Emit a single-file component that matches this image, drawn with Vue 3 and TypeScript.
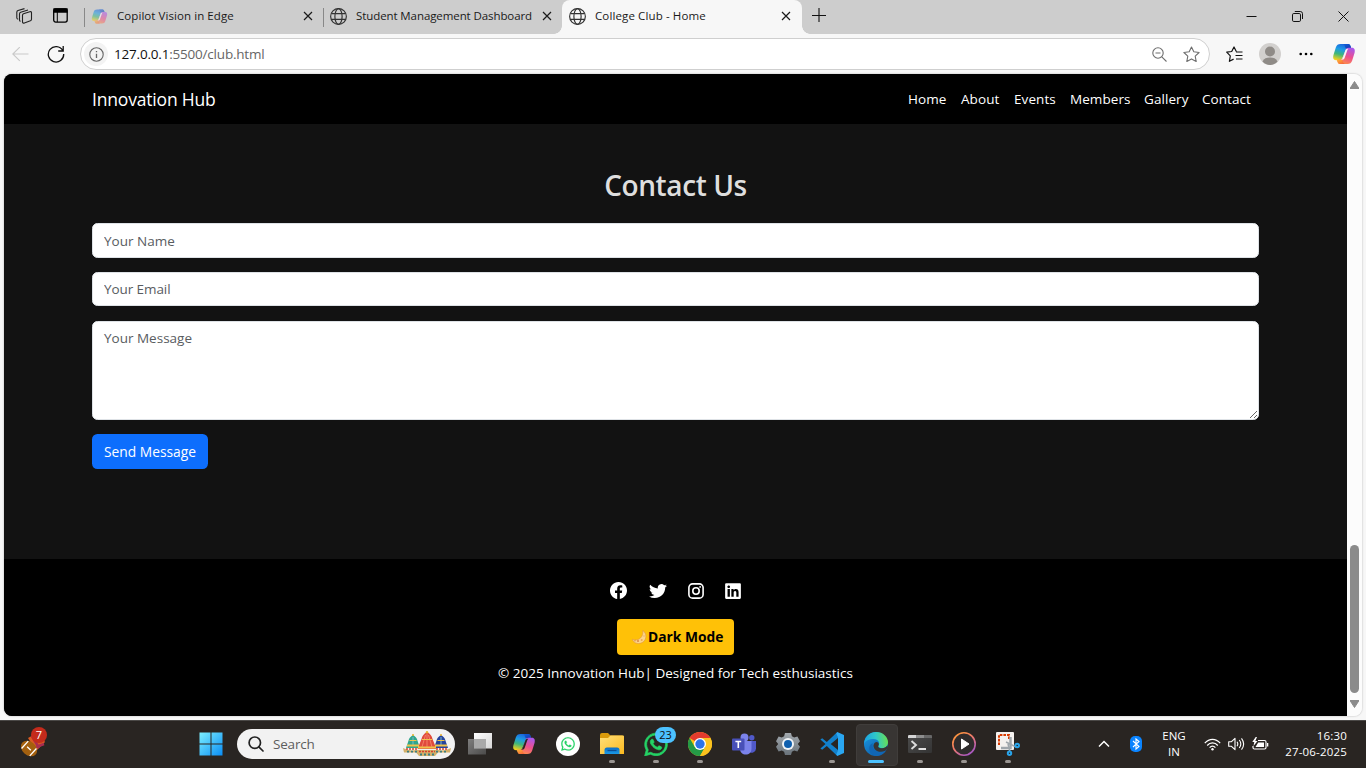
<script setup lang="ts">
import { ref } from 'vue'

interface Tab { title: string; icon: 'copilot' | 'globe'; cls: string; active?: boolean }

const tabs: Tab[] = [
  { title: 'Copilot Vision in Edge', icon: 'copilot', cls: 't-first' },
  { title: 'Student Management Dashboard', icon: 'globe', cls: 't-second' },
  { title: 'College Club - Home', icon: 'globe', cls: 't-third', active: true },
]
const links = ['Home', 'About', 'Events', 'Members', 'Gallery', 'Contact']
const apps = [
  { id: 'taskview', run: false },
  { id: 'copilot', run: false },
  { id: 'wacircle', run: false },
  { id: 'explorer', run: true },
  { id: 'whatsapp', run: true },
  { id: 'chrome', run: true },
  { id: 'teams', run: false },
  { id: 'settings', run: false },
  { id: 'vscode', run: true },
  { id: 'edge', run: true },
  { id: 'terminal', run: true },
  { id: 'media', run: true },
  { id: 'snip', run: true },
]
const name = ref('')
const email = ref('')
const message = ref('')
const waPath = 'M380.9 97.1C339 55.1 283.2 32 223.9 32c-122.4 0-222 99.6-222 222 0 39.1 10.2 77.3 29.6 111L0 480l117.7-30.9c32.4 17.7 68.9 27 106.1 27h.1c122.3 0 224.1-99.6 224.1-222 0-59.3-25.2-115-67.1-157zm-157 341.6c-33.2 0-65.7-8.9-94-25.7l-6.7-4-69.8 18.3L72 359.2l-4.4-7c-18.5-29.4-28.2-63.3-28.2-98.2 0-101.7 82.8-184.5 184.6-184.5 49.3 0 95.6 19.2 130.4 54.1 34.8 34.9 56.2 81.2 56.1 130.5 0 101.8-84.9 184.6-186.6 184.6zm101.2-138.2c-5.5-2.8-32.8-16.2-37.9-18-5.1-1.9-8.8-2.8-12.5 2.8-3.7 5.6-14.3 18-17.6 21.8-3.2 3.7-6.5 4.2-12 1.4-32.6-16.3-54-29.1-75.5-66-5.7-9.8 5.7-9.1 16.3-30.3 1.8-3.7.9-6.9-.5-9.7-1.4-2.8-12.5-30.1-17.1-41.2-4.5-10.8-9.1-9.3-12.5-9.5-3.2-.2-6.9-.2-10.6-.2-3.7 0-9.7 1.4-14.8 6.9-5.1 5.6-19.4 19-19.4 46.3 0 27.3 19.9 53.7 22.6 57.4 2.8 3.7 39.1 59.7 94.8 83.8 35.2 15.2 49 16.5 66.6 13.9 10.7-1.6 32.8-13.4 37.4-26.4 4.6-13 4.6-24.1 3.2-26.4-1.3-2.5-5-3.9-10.5-6.6z'
</script>

<template>
  <div class="screen">
    <svg class="defs" width="0" height="0" aria-hidden="true">
      <defs>
        <linearGradient id="cpA" x1="0.6" y1="0" x2="0.3" y2="1">
          <stop offset="0" stop-color="#1b62dc" /><stop offset=".35" stop-color="#1c9be6" /><stop offset=".65" stop-color="#3fb67a" /><stop offset="1" stop-color="#f2d21c" />
        </linearGradient>
        <linearGradient id="cpB" x1="0.7" y1="0" x2="0.3" y2="1">
          <stop offset="0" stop-color="#a957ea" /><stop offset=".5" stop-color="#ee4f8d" /><stop offset="1" stop-color="#fd9248" />
        </linearGradient>
        <linearGradient id="cpC" x1="0" y1="0" x2="1" y2="1">
          <stop offset="0" stop-color="#0d62dd" /><stop offset="1" stop-color="#1b36ac" />
        </linearGradient>
        <linearGradient id="cpD" x1="0" y1="0" x2="1" y2="1">
          <stop offset="0" stop-color="#ffb732" /><stop offset="1" stop-color="#f4573e" />
        </linearGradient>
        <linearGradient id="winG" x1="0" y1="0" x2="1" y2="1">
          <stop offset="0" stop-color="#7df0ff" /><stop offset="1" stop-color="#0a8df5" />
        </linearGradient>
        <linearGradient id="tvA" x1="0" y1="0" x2="1" y2="1">
          <stop offset="0" stop-color="#fff" /><stop offset="1" stop-color="#d6d6d6" />
        </linearGradient>
        <linearGradient id="tvB" x1="0" y1="0" x2="1" y2="1">
          <stop offset="0" stop-color="#8e8e8e" /><stop offset="1" stop-color="#515151" />
        </linearGradient>
        <linearGradient id="foldG" x1="0" y1="0" x2="1" y2="1">
          <stop offset="0" stop-color="#ffe07a" /><stop offset="1" stop-color="#fbb91f" />
        </linearGradient>
        <linearGradient id="foldB" x1="0" y1="0" x2="0" y2="1">
          <stop offset="0" stop-color="#0d6fc4" /><stop offset="1" stop-color="#1b9ae8" />
        </linearGradient>
        <linearGradient id="gearG" x1="0" y1="0" x2="0" y2="1">
          <stop offset="0" stop-color="#a3a9ae" /><stop offset="1" stop-color="#69727a" />
        </linearGradient>
        <linearGradient id="edA" x1="0" y1="0.4" x2="1" y2="0.3">
          <stop offset="0" stop-color="#1ca3e4" /><stop offset=".5" stop-color="#2fc8c8" /><stop offset="1" stop-color="#6be04e" />
        </linearGradient>
        <linearGradient id="edB" x1="0" y1="0" x2=".8" y2="1">
          <stop offset="0" stop-color="#1b9be6" /><stop offset="1" stop-color="#0c59a4" />
        </linearGradient>
        <linearGradient id="trm" x1="0" y1="0" x2="1" y2="1">
          <stop offset="0" stop-color="#4b4b4b" /><stop offset="1" stop-color="#343434" />
        </linearGradient>
        <linearGradient id="medG" x1="0" y1="0" x2=".7" y2="1">
          <stop offset="0" stop-color="#ff9d2e" /><stop offset=".5" stop-color="#ee7a68" /><stop offset="1" stop-color="#a857c4" />
        </linearGradient>
        <symbol id="copilot" viewBox="0 0 24 24">
          <path d="M8.600 2h7.500c1.300 0 2 .8 2.400 2l.7 2.400h-3c-1.300 0-2 .6-2.400 1.900L10.800 15c-.6 2-1.500 3.200-3.400 3.200H4C1.300 18.200.8 15.800 1.400 13.300L3.800 5.500C4.600 3 6 2 8.600 2z" fill="url(#cpA)" />
          <path d="M12 2h4.100c1.300 0 2 .8 2.400 2l.8 2.600h-4c-1.400 0-2-.6-2.300-1.800C12.700 3.400 12.300 2 10.500 2z" fill="url(#cpC)" />
          <path d="M15.400 22H8c-1.300 0-2-.8-2.400-2L5 17.800h3.200c1.400 0 2.200-.7 2.600-2L13.500 8c.6-1.500 1.500-2.300 3.200-2.300H20c2.700 0 3.200 2.500 2.600 5l-2.400 7.800c-.8 2.500-2.200 3.500-4.800 3.500z" fill="url(#cpB)" />
          <path d="M5 17.800h3.600c1.400 0 2 .6 2.300 1.700.4 1.500 1 2.500 2.500 2.500H8c-1.300 0-2-.8-2.400-2z" fill="url(#cpD)" />
          <path class="gap" d="M13.300 8.600c.4-1.200 1-1.900 2.300-1.900h.8c-.6.500-.9 1-1.200 1.900l-2.400 7c-.5 1.500-1.200 2.200-2.800 2.200h-1c1-.5 1.500-1.300 1.900-2.400z" />
        </symbol>
        <symbol id="globe" viewBox="0 0 16 16">
          <g fill="none" stroke="#333" stroke-width="1.100"><circle cx="8" cy="8" r="7.400" /><ellipse cx="8" cy="8" rx="3.400" ry="7.400" /><path d="M1.300 5.300h13.400M1.300 10.700h13.400" /></g>
        </symbol>
        <symbol id="close" viewBox="0 0 10 10"><path d="M1 1l8 8M9 1L1 9" stroke="#1a1a1a" stroke-width="1.200" fill="none" /></symbol>
      </defs>
    </svg>

    <header class="tabbar">
      <svg class="ws" width="17" height="17" viewBox="0 0 17 17" fill="none" stroke="#222" stroke-width="1.100" stroke-linejoin="round">
        <path d="M6.500 7.200c0-.8.300-1.200 1-1.500l6.300-2c1-.3 1.700.1 1.700 1.100v6.400c0 .8-.4 1.200-1.100 1.500l-6 2.300c-1 .4-1.900 0-1.900-1z" />
        <path d="M4.500 13.400c-.7-.2-1-.6-1-1.400V6c0-.9.400-1.400 1.200-1.700L12 1.900M2.200 11.300C1.300 11 .8 10.600.8 9.700V4.200c0-1 .4-1.400 1.200-1.700L8.500.6" />
      </svg>
      <svg class="pane" width="15" height="15" viewBox="0 0 15 15" fill="none" stroke="#000" stroke-width="1.300">
        <rect x=".7" y=".9" width="13.500" height="13.200" rx="2" /><path d="M1 1h13v3H1z" fill="#000" /><path d="M4.300 4v10" stroke-width="1" />
      </svg>
      <div v-for="t in tabs" :key="t.title" class="tab" :class="[t.cls, { active: t.active }]">
        <svg class="fav" width="17" height="17"><use :href="'#' + t.icon" /></svg>
        <span class="title">{{ t.title }}</span>
        <svg class="x" width="10" height="10"><use href="#close" /></svg>
      </div>
      <svg class="plus" width="14" height="14" viewBox="0 0 14 14"><path d="M7 0v14M0 7.500h14" stroke="#111" stroke-width="1.100" /></svg>
      <div class="winbtns">
        <svg width="11" height="11" viewBox="0 0 11 11"><path d="M.5 5.500h10" stroke="#111" /></svg>
        <svg width="11" height="11" viewBox="0 0 11 11" fill="none" stroke="#111"><rect x=".5" y="2.500" width="8" height="8" rx="1.300" /><path d="M2.800.5h5.500q2.200 0 2.200 2.200v5.300" /></svg>
        <svg width="11" height="11" viewBox="0 0 11 11"><path d="M.5.5l10 10M10.500.5l-10 10" stroke="#111" fill="none" /></svg>
      </div>
    </header>

    <div class="toolbar">
      <svg class="back" width="17" height="15" viewBox="0 0 17 15" fill="none" stroke="#c9c9c9" stroke-width="1.100"><path d="M16.500 7H.8M7.800.1L.8 7l7 6.900" /></svg>
      <svg class="reload" width="18" height="18" viewBox="0 0 18 18" fill="none" stroke="#111" stroke-width="1.300"><path d="M15.700 5.500A7.700 7.700 0 1 0 16.700 9M16.200 1v5h-5" /></svg>
      <div class="url">
        <span class="info"><svg width="15" height="15" viewBox="0 0 15 15"><circle cx="7.500" cy="7.500" r="6.700" fill="none" stroke="#666" stroke-width="1.100" /><path d="M7.500 6.700v4.300M7.500 4v1.300" stroke="#666" stroke-width="1.300" /></svg></span>
        <span class="addr">127.0.0.1<em>:5500/club.html</em></span>
        <svg class="mag" width="15" height="15" viewBox="0 0 15 15" fill="none" stroke="#6e6e6e" stroke-width="1.100"><circle cx="6" cy="6" r="5.200" /><path d="M9.800 9.800l4.700 4.700M3.500 6h5" /></svg>
        <svg class="star" width="17" height="17" viewBox="0 0 17 17" fill="none" stroke="#6e6e6e" stroke-width="1.100" stroke-linejoin="round"><path d="M8.500 1l2.300 4.800 5.300.7-3.900 3.700 1 5.300-4.700-2.600-4.700 2.600 1-5.300L.9 6.500l5.300-.7z" /></svg>
      </div>
      <svg class="favs" width="17" height="17" viewBox="0 0 17 17" fill="none" stroke="#111" stroke-width="1.200" stroke-linejoin="round"><path d="M10.300 5.500L8 1 5.700 5.500.7 6.200 4.300 9.800l-.9 5.500 4.200-2.200M10 6h6.500M9.500 9.500h7M10 13h6.500" /></svg>
      <svg class="avatar" width="22" height="22" viewBox="0 0 22 22"><circle cx="11" cy="11" r="11" fill="#d2d0ce" /><circle cx="11" cy="8.500" r="5" fill="#8f8b87" /><path d="M3.500 18.500c1.500-3.200 4-4 7.500-4s6 .8 7.500 4C16.500 20.800 14 22 11 22s-5.500-1.200-7.500-3.500z" fill="#8f8b87" /></svg>
      <svg class="dots" width="14" height="4" viewBox="0 0 14 4"><circle cx="1.700" cy="2" r="1.300" /><circle cx="7" cy="2" r="1.300" /><circle cx="12.300" cy="2" r="1.300" /></svg>
      <svg class="cop" width="24" height="24"><use href="#copilot" /></svg>
    </div>

    <div class="viewport">
      <div class="page">
        <nav class="navbar">
          <span class="brand">Innovation Hub</span>
          <a v-for="l in links" :key="l" :class="l.toLowerCase()"><span>{{ l }}</span></a>
        </nav>
        <main class="contact-us">
          <h2>Contact Us</h2>
          <form @submit.prevent>
            <input v-model="name" class="name" placeholder="Your Name" />
            <input v-model="email" class="mail" placeholder="Your Email" />
            <textarea v-model="message" placeholder="Your Message"></textarea>
            <button class="send" type="submit">Send Message</button>
          </form>
        </main>
        <footer class="foot">
          <div class="social">
            <svg class="fb" width="17" height="17" viewBox="0 0 16 16" fill="#fff"><path d="M16 8.049c0-4.446-3.582-8.050-8-8.050C3.580 0-.002 3.603-.002 8.050c0 4.017 2.926 7.347 6.750 7.951v-5.625h-2.030V8.050H6.750V6.275c0-2.017 1.195-3.131 3.022-3.131.876 0 1.791.157 1.791.157v1.980h-1.009c-.993 0-1.303.621-1.303 1.258v1.510h2.218l-.354 2.326H9.250V16c3.824-.604 6.750-3.934 6.750-7.951" /></svg>
            <svg width="18" height="17" viewBox="0 0 16 16" fill="#fff" preserveAspectRatio="none"><path d="M5.026 15c6.038 0 9.341-5.003 9.341-9.334q.002-.211-.006-.422A6.700 6.700 0 0 0 16 3.542a6.700 6.700 0 0 1-1.889.518 3.300 3.300 0 0 0 1.447-1.817 6.500 6.500 0 0 1-2.087.793A3.286 3.286 0 0 0 7.875 6.030a9.320 9.320 0 0 1-6.767-3.429 3.290 3.290 0 0 0 1.018 4.382A3.300 3.300 0 0 1 .64 6.575v.045a3.290 3.290 0 0 0 2.632 3.218 3.200 3.200 0 0 1-.865.115 3 3 0 0 1-.614-.057 3.280 3.280 0 0 0 3.067 2.277A6.600 6.600 0 0 1 .78 13.580a6 6 0 0 1-.78-.045A9.340 9.340 0 0 0 5.026 15" /></svg>
            <svg width="16" height="16" viewBox="0 0 16 16" fill="none" stroke="#fff" stroke-width="1.600"><rect x=".9" y=".9" width="14.200" height="14.200" rx="3.700" /><circle cx="8" cy="8" r="3.200" /><circle cx="12.100" cy="3.900" r=".9" fill="#fff" stroke="none" /></svg>
            <svg width="16" height="18" viewBox="0 0 448 512" fill="#fff"><path d="M416 32H31.900C14.300 32 0 46.500 0 64.300v383.400C0 465.500 14.300 480 31.900 480H416c17.600 0 32-14.500 32-32.300V64.300c0-17.800-14.400-32.300-32-32.300zM135.400 416H69V202.200h66.500V416zm-33.200-243c-21.300 0-38.500-17.300-38.500-38.500S80.900 96 102.200 96c21.200 0 38.500 17.300 38.500 38.500 0 21.300-17.200 38.500-38.500 38.500zm282.100 243h-66.400V312c0-24.800-.5-56.700-34.500-56.700-34.600 0-39.900 27-39.900 54.900V416h-66.400V202.200h63.700v29.200h.9c8.900-16.800 30.600-34.500 62.200-34.500 66.500 0 78.900 43.800 78.900 100.900V416z" /></svg>
          </div>
          <button class="mode" type="button">
            <svg width="15" height="14" viewBox="0 0 15 14"><path d="M10.700.4C15 3.200 14.800 9.400 11 12.100 7.300 14.700 1.900 13.700.2 9.300c3.300 1.200 6.300.7 8.300-1.300C10.500 6 11.200 3.200 10.700.4z" fill="#fbd58a" stroke="#e39544" stroke-width=".6" /><circle cx="6" cy="11" r="1.100" fill="#dd8a4a" /><circle cx="3" cy="10.700" r=".7" fill="#dd8a4a" /><circle cx="9.700" cy="10" r="1" fill="#eda658" /><circle cx="12" cy="6" r=".8" fill="#f0b567" /></svg><b>Dark Mode</b>
          </button>
          <p>© 2025 Innovation Hub| Designed for Tech esthusiastics</p>
        </footer>
      </div>
      <div class="scroll">
        <svg width="9" height="8" viewBox="0 0 9 8"><path d="M4.500.5L9 7.500H0z" fill="#8b8b8b" stroke="#8b8b8b" stroke-linejoin="round" /></svg>
        <i class="thumb"></i>
        <svg width="9" height="8" viewBox="0 0 9 8"><path d="M4.500 7.500L9 .5H0z" fill="#8b8b8b" stroke="#8b8b8b" stroke-linejoin="round" /></svg>
      </div>
    </div>

    <div class="taskbar">
      <div class="widget">
        <svg width="28" height="32" viewBox="0 0 28 32">
          <path d="M8 11L19 5l6 10-9 9z" fill="#d85b22" /><path d="M12 9l7 12M16 20l8-3" stroke="#a92d4f" stroke-width="2.500" />
          <g transform="rotate(42 9 21.500)"><ellipse cx="9" cy="21.500" rx="9" ry="6.800" fill="#a3600f" /><path d="M3.500 16.500v10M14.500 16.500v10M6.500 21.500h5" stroke="#fff" stroke-width="1.300" /></g>
        </svg>
        <span class="badge7">7</span>
      </div>
      <svg class="start" width="24" height="24" viewBox="0 0 24 24"><path d="M.5.5h11v11H.5zM12.500.5h11v11h-11zM.5 12.500h11v11H.5zM12.500 12.500h11v11h-11z" fill="url(#winG)" /></svg>
      <div class="search">
        <svg width="16" height="16" viewBox="0 0 16 16" fill="none" stroke="#222" stroke-width="1.700"><circle cx="6.800" cy="6.700" r="5.700" /><path d="M10.800 10.800l4.200 4.200" stroke-linecap="round" /></svg>
        <span>Search</span>
        <svg class="chariots" width="48" height="26" viewBox="0 0 48 26">
          <path d="M0 17c4 2 9 3 13 2h22c5 1 9 0 13-2l-1 4.500H35l-3 3.500H16l-3-3.500H1z" fill="#d3b06a" />
          <path d="M10 4c2.500 1.500 4 3 4.600 6L17 17H3l2.400-7C6 7 7.500 5.500 10 4z" fill="#2fa58c" /><path d="M38 4c2.500 1.500 4 3 4.600 6L45 17H31l2.400-7C34 7 35.500 5.500 38 4z" fill="#27449d" />
          <path d="M24 1c3.500 2 5 4 5.500 7l4 10h-19l4-10C19 5 20.500 3 24 1z" fill="#e04a3c" />
          <path d="M22.500 4L19 16M25.500 4L29 16M24 3v14" stroke="#f4876a" stroke-width=".9" />
          <path d="M10 6v9M38 6v9" stroke="#7fb8c9" stroke-width="1" />
          <path d="M4 14.500h12M32 14.500h12M15 16.500h18" stroke="#f0c24a" stroke-width="2" /><path d="M19 8.500h10M6.500 9.500h7M34.500 9.500h7" stroke="#f0c24a" stroke-width="1" />
          <path d="M3 18h12M33 18h12M16 20.500h16" stroke="#d6402e" stroke-width="1.400" stroke-dasharray="2 1" />
          <path d="M4 20.700h11M33 20.700h11M17 23.500h14" stroke="#3a7d80" stroke-width="1.800" stroke-dasharray="2 2" />
          <circle cx="24" cy="1.300" r="1.200" fill="#e8b02a" /><circle cx="10" cy="4" r="1" fill="#e8b02a" /><circle cx="38" cy="4" r="1" fill="#e8b02a" />
        </svg>
      </div>
      <div class="apps">
        <div v-for="a in apps" :key="a.id" class="app" :class="{ on: a.id === 'edge', run: a.run, dark: a.id === 'copilot' }">
          <svg width="24" height="24" viewBox="0 0 24 24">
            <template v-if="a.id === 'taskview'"><path d="M6 1h18v15.500H6z" fill="url(#tvA)" /><path d="M0 7h18v15.500H0z" fill="url(#tvB)" fill-opacity=".85" /><path d="M6 7h12v9.500H6z" fill="#a9a9a9" /></template>
            <use v-else-if="a.id === 'copilot'" href="#copilot" />
            <template v-else-if="a.id === 'wacircle'"><circle cx="12" cy="12" r="12" fill="#fff" /><svg x="5" y="4.200" width="14" height="15.500" viewBox="0 0 448 512"><path :d="waPath" fill="#25d366" stroke="#25d366" stroke-width="6" /></svg></template>
            <template v-else-if="a.id === 'explorer'"><path d="M0 3Q0 1 2 1h6l2.500 2.500H22q2 0 2 2V8H0z" fill="#d99a0b" /><path d="M0 6h8l2.500-2.500H23q1 0 1 1V22H0z" fill="url(#foldG)" /><path d="M4.500 22v-4q0-2.500 2.500-2.500h10q2.500 0 2.500 2.500v4z" fill="url(#foldB)" /><path d="M7.500 18.500h9" stroke="#0a4e95" stroke-width="1.200" /></template>
            <svg v-else-if="a.id === 'whatsapp'" x="0" y="-.5" width="24" height="26" viewBox="0 0 448 512"><path :d="waPath" fill="#25d366" stroke="#25d366" stroke-width="14" /></svg>
            <template v-else-if="a.id === 'chrome'"><circle cx="12" cy="12" r="12" fill="#fbc116" /><path d="M12 12L1.600 6A12 12 0 0 1 22.400 6H12z" fill="#e33b2e" /><path d="M1.600 6L6.800 15 12 12l5.200 3L12 24A12 12 0 0 1 1.600 6z" fill="#249a46" /><path d="M22.400 6H12v6l5.200 3L12 24A12 12 0 0 0 22.400 6z" fill="#fcc31e" /><circle cx="12" cy="12" r="6" fill="#fff" /><circle cx="12" cy="12" r="4.700" fill="#2b73e8" /></template>
            <template v-else-if="a.id === 'teams'"><circle cx="12.500" cy="5.500" r="4" fill="#7b83eb" /><circle cx="19.800" cy="5.700" r="2.700" fill="#5059c9" /><path d="M15 9h9v7.500a4.500 4.500 0 0 1-7 3.500z" fill="#5059c9" /><path d="M8 9h11.500v7.500c0 4-2.500 6-5.700 6S8 20.500 8 16.500z" fill="#7b83eb" /><rect x="0" y="6.500" width="12.500" height="12" rx="1" fill="#4850b8" /><path d="M3.400 9.500h5.800M6.300 9.500v6.500" stroke="#fff" stroke-width="1.600" /></template>
            <template v-else-if="a.id === 'settings'"><path d="M9 1h6l.9 3.200 2.300 1.300 3.200-.9 2.600 4.600-2.200 2.800 2.200 2.800-2.600 4.600-3.200-.9-2.300 1.300L15 23H9l-.9-3.200-2.300-1.300-3.200.9L0 14.800 2.200 12 0 9.200l2.600-4.600 3.200.9 2.300-1.300z" fill="url(#gearG)" /><circle cx="12" cy="12" r="6" fill="#f0f3f6" /><circle cx="12" cy="12" r="4" fill="#0f5fae" /></template>
            <template v-else-if="a.id === 'vscode'"><path d="M17.300 0L6.800 10 2.200 6.300.4 7.500 5.500 12 .4 16.500l1.800 1.200L6.800 14l10.500 10 .7-6-7.300-6L18 6z" fill="#1280cb" /><path d="M17.300 0L24 3v18l-6.700 3-1-1.500L18 18V6l-1.700-4.500z" fill="#2aa7f2" /></template>
            <template v-else-if="a.id === 'edge'"><circle cx="12" cy="12" r="12" fill="url(#edB)" /><path d="M.2 10.500C1 4.500 6 0 12.200 0 19 0 24 5 24 10.200c0 3.600-2.500 6-6 6-3.300 0-4.200-1.600-3.500-2.600 1.700-2.200.2-6.600-5-6.600C5 7 1.200 8.800.2 12z" fill="url(#edA)" /><path d="M8.500 12.500c0 4.800 4 8 9 7 2.200-.4 4-1.200 5-2.500-1.700 4.500-6 7-10.500 7-4.500-.5-7-4-6.800-8 .1-2.500 1.800-4.300 4.300-5-.7.500-1 1-1 1.500z" fill="#1166b4" /><path d="M14.400 13.700c-.8 1.100.3 2.600 3.600 2.600 2.300 0 4.200-1 5.200-2.800L24 16l-1.300 1.200c-.6.800-1 1.200-1.500 1.500-5 2.700-10.500.3-11.500-3.700-.7-2.500.7-4.700 3-5 2 .4 2.700 2.200 1.700 3.700z" fill="#383533" /></template>
            <template v-else-if="a.id === 'terminal'"><rect y="3" width="24" height="18" rx="1.200" fill="url(#trm)" /><path d="M0 6V4.200Q0 3 1.200 3H8v3z" fill="#d5d5d5" /><path d="M8 3h8v3H8z" fill="#8d8d8d" /><path d="M16 3h6.800Q24 3 24 4.200V6h-8z" fill="#686868" /><path d="M3.500 9l4.500 4-4.500 4" fill="none" stroke="#ddd" stroke-width="1.900" /><path d="M10.500 17H18" stroke="#fff" stroke-width="1.700" /></template>
            <template v-else-if="a.id === 'media'"><circle cx="12" cy="12" r="11.200" fill="#2e2c2c" stroke="url(#medG)" stroke-width="1.600" /><path d="M9.500 7v10l7.500-5z" fill="#fff" stroke="#fff" stroke-linejoin="round" /></template>
            <template v-else><rect width="18" height="18" rx="1" fill="#f4f1ef" /><path d="M3 13V3h10v4" fill="none" stroke="#d83b01" stroke-width="2" stroke-dasharray="2.600 1" /><path d="M14.500 5v11H5" fill="none" stroke="#9fa6ac" stroke-width="2.500" /><path d="M10 10l10 5M12 12l2 8" stroke="#9fa6ac" stroke-width="1.500" /><circle cx="21.200" cy="13.500" r="1.800" fill="none" stroke="#28a4ea" stroke-width="2" /><circle cx="13.500" cy="21.200" r="1.700" fill="none" stroke="#28a4ea" stroke-width="2" /></template>
          </svg>
          <span v-if="a.id === 'whatsapp'" class="badge23">23</span>
        </div>
      </div>
      <div class="tray">
        <svg class="chev" width="12" height="8" viewBox="0 0 12 8"><path d="M1 6.500l5-5 5 5" fill="none" stroke="#fff" stroke-width="1.500" /></svg>
        <svg class="bt" width="12" height="16" viewBox="0 0 12 16"><rect width="12" height="16" rx="5" fill="#0a84ff" /><path d="M3 5l6 5.500-3 2.500V3l3 2.500L3 11" fill="none" stroke="#fff" stroke-width="1.100" /></svg>
        <div class="lang"><span>ENG</span><span>IN</span></div>
        <svg class="wifi" width="17" height="13" viewBox="0 0 17 13" fill="none" stroke="#fff" stroke-width="1.200"><path d="M.8 5.200c4.500-5 10.900-5 15.400 0M3.200 7.500c3-3.500 7.600-3.500 10.600 0M5.600 9.600c1.800-2 4-2 5.800 0" /><circle cx="8.500" cy="11.300" r="1.200" fill="#fff" stroke="none" /></svg>
        <svg class="vol" width="17" height="14" viewBox="0 0 17 14" fill="none" stroke="#fff" stroke-width="1.100" stroke-linejoin="round"><path d="M.7 4.700h2.800L7 1.300v11.400L3.500 9.300H.7zM9 4.700q1.600 2.300 0 4.600M11.300 3q3 4 0 8M13.500 1.300q4.300 5.700 0 11.400" /></svg>
        <svg class="bat" width="17" height="14" viewBox="0 0 17 14"><path d="M6 3.500h6.500q1.500 0 1.500 1.500v5.500q0 1.500-1.500 1.500h-10Q1 12 1 10.500V9" fill="none" stroke="#fff" stroke-width="1.200" /><path d="M15 6h1.300v3.500H15zM6.200 5.500H12V10H3.500z" fill="#fff" /><path d="M3.700 0L.3 5h2L1.500 9l4-5H3.300L5 0z" fill="#fff" /></svg>
        <div class="clock"><span class="time">16:30</span><span class="date">27-06-2025</span></div>
      </div>
    </div>
  </div>
</template>

<style>
body { margin: 0; overflow: hidden; }
</style>

<style scoped>
* { box-sizing: border-box; }
.screen { --gap: #f7f7f7; width: 1366px; height: 768px; display: flex; flex-direction: column; background: #f7f7f7; font-family: "Open Sans", "Noto Sans", sans-serif; overflow: hidden; }
.defs { position: absolute; }
svg { display: block; flex: none; }
.gap { fill: var(--gap); }

.tabbar { height: 34px; background: #cdcdcd; display: flex; align-items: flex-start; font-size: 11.500px; color: #1a1a1a; flex: none; }
.ws { margin: 8px 0 0 16px; }
.pane { margin: 8px 16px 0 20px; }
.tab { height: 34px; display: flex; align-items: flex-start; width: 239px; padding: 0 10px 0 7px; position: relative; }
.tab:not(.active)::before { content: ""; position: absolute; left: 0; top: 8px; height: 19px; width: 1px; background: #888; }
.t-first .fav { opacity: .55; }
.fav { margin-top: 8px; }
.title { margin: 8px 0 0 9px; line-height: 16px; white-space: nowrap; flex: 1; }
.t-first .title { letter-spacing: .07px; }
.t-second .title { letter-spacing: -.09px; }
.t-third .title { letter-spacing: .12px; }
.x { margin-top: 11px; }
.tab.active { background: #f7f7f7; border-radius: 8px 8px 0 0; width: 240px; padding: 0 11px 0 7px; }
.tab.active::before, .tab.active::after { content: ""; position: absolute; bottom: 0; width: 8px; height: 8px; }
.tab.active::before { left: -8px; background: radial-gradient(circle at 0 0, #cdcdcd 7.500px, #f7f7f7 8px); }
.tab.active::after { right: -8px; background: radial-gradient(circle at 100% 0, #cdcdcd 7.500px, #f7f7f7 8px); }
.plus { margin: 8px 0 0 10px; }
.winbtns { margin: 11px 17px 0 auto; display: flex; gap: 35px; }

.toolbar { height: 40px; display: flex; align-items: center; flex: none; }
.back { margin-left: 12px; }
.reload { margin-left: 18px; }
.url { margin-left: 15px; width: 1130px; height: 32px; border: 1px solid #cfcfcf; border-radius: 16px; background: #fff; display: flex; align-items: center; }
.info { width: 24px; height: 24px; margin-left: 3px; border-radius: 50%; background: #f3f3f3; display: flex; align-items: center; justify-content: center; }
.addr { margin-left: 6px; font-size: 13.500px; color: #111; letter-spacing: -.2px; flex: 1; line-height: 20px; }
.addr em { font-style: normal; color: #666; }
.mag { margin-right: 16px; }
.star { margin-right: 9px; }
.favs { margin-left: 16px; }
.avatar { margin-left: 16px; }
.dots { margin-left: 18px; }
.cop { margin-left: 19px; }

.viewport { height: 642px; margin: 0 4px 4px; display: flex; border-radius: 8px; overflow: hidden; flex: none; box-shadow: 0 0 2px rgba(0, 0, 0, .3); }
.page { width: 1343px; background: #121212; }
.navbar { height: 50px; background: #000; color: #fff; display: flex; align-items: center; padding-left: 88px; font-size: 13.500px; font-weight: 500; line-height: 22px; letter-spacing: .07px; }
.brand { width: 816px; font-size: 17.500px; font-weight: 400; white-space: nowrap; letter-spacing: -.18px; }
.navbar a { white-space: nowrap; }
.home, .about { width: 53px; }
.events { width: 56px; }
.members { width: 74px; }
.gallery { width: 58px; }
.contact-us { height: 435px; padding: 42px 88px 0; }
h2 { margin: 0; height: 38px; line-height: 38px; font-size: 28px; font-weight: 600; color: #dedede; text-align: center; letter-spacing: -.4px; }
form { margin-top: 19px; display: flex; flex-direction: column; align-items: flex-start; }
input, textarea { width: 1167px; height: 35px; border: 1px solid #dee2e6; border-radius: 5.400px; padding: 5px 11px; font: 13.500px/22px "Open Sans", "Noto Sans", sans-serif; background: #fff; outline: none; display: block; }
input::placeholder, textarea::placeholder { color: #595c5f; opacity: 1; }
.mail { height: 34px; margin-top: 14px; padding: 5px 11px; letter-spacing: -.08px; }
textarea { height: 99px; margin-top: 15px; resize: vertical; }
.send { margin-top: 14px; width: 116px; height: 35px; background: #0d6efd; color: #fff; border: 0; border-radius: 5.400px; font: 500 13.800px/22px "Open Sans", "Noto Sans", sans-serif; padding: 1px 0 0; white-space: nowrap; }
.foot { height: 157px; background: #000; color: #fff; display: flex; flex-direction: column; align-items: center; padding-top: 22px; }
.social { display: flex; align-items: center; height: 19px; gap: 21px; }
.fb { margin-right: 1px; }
.mode { margin-top: 19px; width: 117px; height: 36px; border: 0; border-radius: 4px; background: #ffc107; color: #000; font: 13.800px/22px "Open Sans", "Noto Sans", sans-serif; display: flex; align-items: center; padding: 0 0 0 15px; white-space: nowrap; }
.mode b { font-weight: 700; margin-left: 1px; }
.foot p { margin: 7px 0 0; font-size: 13.500px; line-height: 22px; white-space: nowrap; }
.scroll { width: 15px; background: #fcfcfc; display: flex; flex-direction: column; align-items: center; padding: 7px 0 8px; }
.thumb { margin: auto 0 7px; width: 9px; height: 148px; border-radius: 5px; background: #8b8b8b; }

.taskbar { height: 48px; background: #292522; border-top: 1px solid #4b4947; padding-bottom: 1px; display: flex; align-items: center; flex: none; }
.widget { position: relative; width: 28px; height: 32px; margin: -2px 0 0 20px; }
.badge7 { position: absolute; left: 11px; top: 0; width: 16px; height: 16px; border-radius: 50%; background: #c42b1c; color: #fff; font-size: 11px; line-height: 16px; text-align: center; }
.start { margin-left: 151px; }
.search { margin-left: 14px; width: 218px; height: 30px; border-radius: 15px; background: #f2f2f2; display: flex; align-items: center; padding-left: 11px; font-size: 13.500px; color: #5d5d5d; letter-spacing: -.2px; }
.search span { margin-left: 9px; flex: 1; line-height: 20px; }
.chariots { margin-right: 4px; }
.apps { margin-left: 3px; display: flex; }
.app { position: relative; width: 44px; height: 46px; display: flex; align-items: center; justify-content: center; }
.app.dark { --gap: #292522; }
.app > svg { position: relative; }
.app.on::before { content: ""; position: absolute; left: 2px; top: 3px; width: 40px; height: 40px; border-radius: 4px; background: #383533; border: 1px solid #403d3b; }
.app.run::after { content: ""; position: absolute; left: 19px; bottom: 4px; width: 6px; height: 3px; border-radius: 2px; background: #999592; }
.app.on::after { left: 14px; width: 16px; background: #4cc2ff; }
.badge23 { position: absolute; left: 21px; top: 6px; width: 21px; height: 16px; border-radius: 8px; background: #4cc2ff; color: #111; font-size: 11px; line-height: 16px; text-align: center; }
.tray { margin-left: auto; display: flex; align-items: center; color: #fff; font-size: 11.500px; line-height: 16px; padding-right: 19px; }
.bt { margin-left: 20px; }
.lang { margin-left: 16px; width: 32px; display: flex; flex-direction: column; align-items: center; }
.wifi { margin-left: 14px; }
.vol { margin-left: 7px; }
.bat { margin-left: 7px; }
.clock { margin-left: 16px; width: 62px; display: flex; flex-direction: column; align-items: flex-end; white-space: nowrap; letter-spacing: .18px; }
</style>
